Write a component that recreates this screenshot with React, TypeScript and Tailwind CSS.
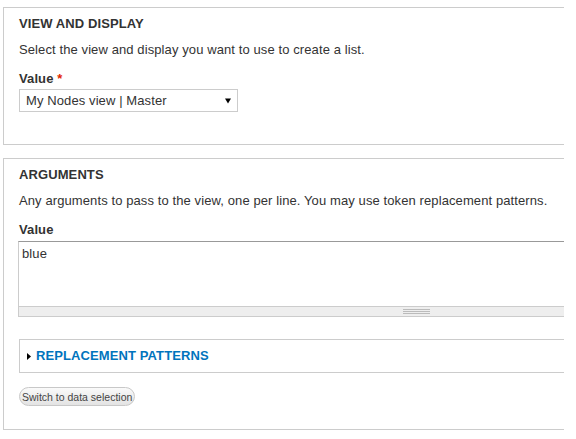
import React from 'react';

const font = { fontFamily: '"Liberation Sans", Arial, sans-serif' };

function SelectArrow() {
  return (
    <svg width="6" height="6" viewBox="0 0 6 6" className="block">
      <path d="M0 0.5 L6 0.5 L3 5.5 Z" fill="#000" />
    </svg>
  );
}

function Fieldset({ children, className = '' }: { children: React.ReactNode; className?: string }) {
  return (
    <div className={`w-[620px] border border-[#ccc] bg-white pt-[8px] px-[15px] ${className}`}>
      {children}
    </div>
  );
}

export default function App() {
  return (
    <div className="w-[576px] h-[439px] bg-white text-[#333] text-[13px] tracking-[0.1px]" style={font}>
      <div className="w-[564px] overflow-hidden pt-[7px] pl-[3px]">
        <Fieldset className="pb-[32px]">
          <h2 className="text-[13px] leading-[16px] font-bold uppercase text-[#333]">View and display</h2>
          <p className="mt-[10px] leading-[16px]">Select the view and display you want to use to create a list.</p>
          <label className="block mt-[13px] leading-[16px] font-bold">
            Value <span className="text-[#e32700]">*</span>
          </label>
          <div className="mt-[2px] w-[219px] h-[23px] border border-[#ccc] flex items-center justify-between pl-[6px] pr-[6px]">
            <span className="leading-[16px]">My Nodes view | Master</span>
            <SelectArrow />
          </div>
        </Fieldset>

        <Fieldset className="mt-[13px] pb-[23px]">
          <h2 className="text-[13px] leading-[16px] font-bold uppercase text-[#333]">Arguments</h2>
          <p className="mt-[10px] leading-[16px]">
            Any arguments to pass to the view, one per line. You may use token replacement patterns.
          </p>
          <label className="block mt-[13px] leading-[16px] font-bold">Value</label>
          <div className="mt-[3px] ml-[-1px]">
            <div className="h-[65px] border-t border-t-[#999] border-l border-l-[#ccc] pl-[3px] pt-[4px] leading-[16px]">
              blue
            </div>
            <div className="h-[11px] bg-[#eee] border-t border-b border-l border-[#ccc] pl-[384px]">
              <div className="w-[27px] pt-[2px] flex flex-col gap-[1px]">
                <div className="h-px bg-[#bbb]" />
                <div className="h-px bg-[#bbb]" />
                <div className="h-px bg-[#bbb]" />
              </div>
            </div>
          </div>

          <div className="mt-[22px] h-[34px] border border-[#ccc] flex items-center pl-[7px]">
            <svg width="4" height="7" viewBox="0 0 4 7" className="block mr-[5px]">
              <path d="M0 0 L4 3.5 L0 7 Z" fill="#000" />
            </svg>
            <span className="font-bold uppercase text-[#0074bd] leading-[16px]">Replacement patterns</span>
          </div>

          <button
            className="mt-[14px] h-[19px] px-[2px] rounded-full border border-[#c8c8c8] bg-gradient-to-b from-[#fafafa] to-[#e3e3e3] text-[10.5px] leading-[14px] tracking-normal text-[#444] flex items-center"
            style={font}
          >
            Switch to data selection
          </button>
        </Fieldset>
      </div>
    </div>
  );
}
